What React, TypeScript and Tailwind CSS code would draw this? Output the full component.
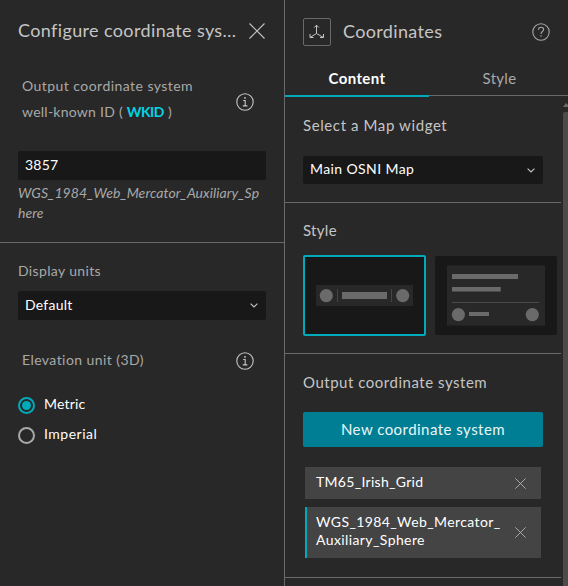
import { useState } from "react"
import type { ReactNode } from "react"

const CloseIcon = ({ className }: { className: string }) => (
  <svg viewBox="0 0 16 16" className={className} fill="none" stroke="currentColor" strokeWidth="1.1">
    <path d="M0.5 0.5l15 15M15.5 0.5l-15 15" />
  </svg>
)

const ChevronIcon = () => (
  <svg viewBox="0 0 8 5" className="h-[5px] w-2 text-[#c5c5c5]" fill="none" stroke="currentColor" strokeWidth="1.1">
    <path d="M0.6 0.6L4 4 7.4 0.6" />
  </svg>
)

const InfoIcon = () => (
  <svg viewBox="0 0 18 18" className="h-[18px] w-[18px] text-[#c5c5c5]" fill="none" stroke="currentColor" strokeWidth="1.1">
    <circle cx="9" cy="9" r="8.2" />
    <path d="M7.2 7.5h2v5.2M6.8 12.9h4.6" />
    <circle cx="9" cy="4.9" r="0.9" fill="currentColor" stroke="none" />
  </svg>
)

const HelpIcon = () => (
  <svg viewBox="0 0 18 18" className="h-[18px] w-[18px] text-[#a8a8a8]" fill="none" stroke="currentColor" strokeWidth="1.1">
    <circle cx="9" cy="9" r="8.2" />
    <path d="M6.5 6.8c0-1.5 1-2.5 2.6-2.5 1.5 0 2.5 0.9 2.5 2.2 0 2-2.6 2-2.6 4.4" />
    <path d="M9 12.3v1.4" />
  </svg>
)

const AxesIcon = () => (
  <svg viewBox="0 0 16 16" className="h-4 w-4 text-[#c5c5c5]" fill="none" stroke="currentColor" strokeWidth="1">
    <path d="M7.5 1.2v8.3M7.5 9.5l-6.3 3.9M7.5 9.5l6.8 3.9" />
    <path d="M5.2 3.5l2.3-2.3 2.3 2.3M1 10v3.5h3.5M14.5 10v3.5H11" />
  </svg>
)

// Thumbnail of the one line toolbar layout
const CompactPreview = () => (
  <svg viewBox="0 0 119 77" className="h-[77px] w-[119px]">
    <rect x="11" y="28" width="97" height="21" fill="#282828" />
    <g fill="#6a6a6a">
      <circle cx="21.3" cy="38.6" r="6.6" />
      <rect x="37" y="35" width="45" height="7" />
      <circle cx="97.7" cy="38.6" r="6.6" />
    </g>
    <path d="M32.5 32v13M86.5 32v13" stroke="#454545" />
  </svg>
)

// Thumbnail of the stacked card layout
const CardPreview = () => (
  <svg viewBox="0 0 122 79" className="h-[79px] w-[122px]">
    <rect x="12" y="9.5" width="98" height="60" fill="#282828" />
    <g fill="#6a6a6a">
      <rect x="17" y="18" width="66" height="5" />
      <rect x="17" y="31" width="48.7" height="4.5" />
      <circle cx="23.4" cy="58.6" r="6.6" />
      <rect x="34" y="56" width="20" height="4" />
      <circle cx="97.3" cy="58.6" r="6.6" />
    </g>
    <path d="M17 46.5h87" stroke="#4b4b4b" />
  </svg>
)

function Select({ value, children }: { value: string; children: ReactNode }) {
  return (
    <button
      type="button"
      aria-label={value}
      className="flex h-full w-full items-center justify-between rounded-[2px] bg-[#181818] pr-2 pl-[7px] text-sm text-white"
    >
      {children}
      <ChevronIcon />
    </button>
  )
}

function Radio({ checked, onSelect, children }: { checked: boolean; onSelect: () => void; children: ReactNode }) {
  return (
    <button type="button" role="radio" aria-checked={checked} onClick={onSelect} className="flex h-[30px] items-center gap-[9px] text-sm text-white">
      <span
        className={`flex h-[17px] w-[17px] items-center justify-center rounded-full border-2 ${
          checked ? "border-[#00aabb]" : "border-[#a8a8a8]"
        }`}
      >
        {checked && <span className="h-[9px] w-[9px] rounded-full bg-[#00aabb]" />}
      </span>
      {children}
    </button>
  )
}

function ConfigurePanel() {
  const [unit, setUnit] = useState("metric")

  return (
    <aside className="flex w-[285px] shrink-0 flex-col border-r border-[#6a6a6a]">
      <section className="h-[243px] border-b border-[#6a6a6a] pr-[18px] pl-[18px]">
        <header className="flex h-[61px] items-center justify-between pr-px">
          <h2 className="pb-0.5 text-lg tracking-[0.37px] whitespace-nowrap text-[#c5c5c5]">Configure coordinate sys…</h2>
          <CloseIcon className="h-4 w-4 text-[#c5c5c5]" />
        </header>
        <div className="mt-3 flex h-[58px] items-center justify-between pr-3 pl-1">
          <p className="pb-[7px] text-sm leading-[26px] tracking-[0.45px] whitespace-nowrap text-[#a8a8a8]">
            Output coordinate system
            <br />
            <span className="tracking-[0.25px]">well-known ID ( </span>
            <span className="font-bold tracking-[-0.5px] text-[#00d5e6]">WKID</span> )
          </p>
          <InfoIcon />
        </div>
        <input
          defaultValue="3857"
          className="mt-5 block h-[29px] w-full rounded-[2px] bg-[#181818] px-[7px] pb-0.5 text-sm tracking-[0.2px] text-white outline-none"
        />
        <p className="pt-[3px] text-sm leading-5 tracking-[0.07px] whitespace-nowrap text-[#a8a8a8] italic">
          WGS_1984_Web_Mercator_Auxiliary_Sp
          <br />
          here
        </p>
      </section>

      <section className="px-[18px] pt-[18px]">
        <h3 className="h-[30px] text-sm leading-5 tracking-[0.35px] text-[#a8a8a8]">Display units</h3>
        <div className="h-[29px]">
          <Select value="Default">
            <span className="pb-0.5 tracking-[0.25px]">Default</span>
          </Select>
        </div>
        <div className="mt-8 mb-5 flex h-[18px] items-center justify-between pr-3 pl-1">
          <h3 className="pb-0.5 text-sm tracking-[0.43px] text-[#a8a8a8]">Elevation unit (3D)</h3>
          <InfoIcon />
        </div>
        <div role="radiogroup">
          <Radio checked={unit === "metric"} onSelect={() => setUnit("metric")}>
            <span className="pb-0.5 tracking-[0.2px]">Metric</span>
          </Radio>
          <Radio checked={unit === "imperial"} onSelect={() => setUnit("imperial")}>
            <span className="pb-0.5 tracking-[0.5px]">Imperial</span>
          </Radio>
        </div>
      </section>
    </aside>
  )
}

function CoordinatesPanel() {
  return (
    <main className="flex min-w-0 flex-1 flex-col">
      <header className="flex h-[63px] items-center pr-[18px] pl-[18px]">
        <span className="flex h-7 w-7 items-center justify-center rounded-[2px] border border-[#6a6a6a]">
          <AxesIcon />
        </span>
        <h1 className="ml-3 flex-1 pb-0.5 text-lg tracking-[0.35px] text-[#c5c5c5]">Coordinates</h1>
        <HelpIcon />
      </header>
      <nav className="flex h-[34px] text-[15px] leading-[31px]">
        <button type="button" className="w-36 border-b-2 border-[#00aabb] pb-px font-bold tracking-[0.4px] text-white">
          Content
        </button>
        <button type="button" className="mb-px flex-1 border-b border-[#6a6a6a] pb-px pl-0.5 tracking-[0.3px] text-[#a8a8a8]">
          Style
        </button>
      </nav>

      <div className="flex min-h-0 flex-1">
        <div className="w-[276px] shrink-0">
          <section className="h-[106px] border-b border-[#6a6a6a] pt-[17px] pl-[18px]">
            <h3 className="h-[42px] text-[15px] leading-[22px] tracking-[0.6px] text-[#c5c5c5]">Select a Map widget</h3>
            <div className="h-7 w-60">
              <Select value="Main OSNI Map">
                <span className="pb-0.5 tracking-[0.4px]">Main OSNI Map</span>
              </Select>
            </div>
          </section>
          <section className="h-[151px] border-b border-[#6a6a6a] pt-4 pl-[18px]">
            <h3 className="h-9 text-[15px] leading-[22px] tracking-[0.3px] text-[#c5c5c5]">Style</h3>
            <div className="flex items-center gap-[9px]">
              <button type="button" className="rounded-[2px] border-2 border-[#00aabb] bg-[#181818]">
                <CompactPreview />
              </button>
              <button type="button" className="rounded-[2px] bg-[#181818]">
                <CardPreview />
              </button>
            </div>
          </section>
          <section className="h-56 border-b border-[#6a6a6a] pt-[17px] pl-[18px]">
            <h3 className="h-[41px] text-[15px] leading-[22px] tracking-[0.52px] text-[#c5c5c5]">Output coordinate system</h3>
            <button type="button" className="h-[35px] w-60 rounded-[2px] bg-[#007f94] pb-px text-[15px] tracking-[0.46px] text-[#eaf5f7]">
              New coordinate system
            </button>
            <ul className="mt-5 ml-0.5 flex w-[236px] flex-col gap-2 text-sm text-white">
              <li className="flex h-8 items-center justify-between bg-[#444] pr-[15px] pl-[11px]">
                <span className="pb-0.5 tracking-[0.3px]">TM65_Irish_Grid</span>
                <CloseIcon className="h-[11px] w-[11px] text-[#c5c5c5]" />
              </li>
              <li className="flex h-[51px] items-center justify-between border-l-2 border-[#00aabb] bg-[#444] pr-[15px] pl-[9px]">
                <span className="pb-[3px] leading-[18px] tracking-[0.4px] whitespace-nowrap">
                  WGS_1984_Web_Mercator_
                  <br />
                  Auxiliary_Sphere
                </span>
                <CloseIcon className="h-[11px] w-[11px] text-[#c5c5c5]" />
              </li>
            </ul>
          </section>
        </div>
        <div className="ml-0.5 flex flex-1 flex-col overflow-hidden">
          <svg viewBox="0 0 5 15" className="h-[15px] w-[5px] shrink-0" fill="#6a6a6a">
            <path d="M0 10l3-4 2 2v2z" />
          </svg>
          <div className="flex-1 rounded-tl-[2px] bg-[#4b4b4b]" />
        </div>
      </div>
    </main>
  )
}

export default function App() {
  return (
    <div className="flex h-[586px] w-[568px] overflow-hidden bg-[#282828] font-['Lato','Liberation_Sans',sans-serif]">
      <ConfigurePanel />
      <CoordinatesPanel />
    </div>
  )
}
